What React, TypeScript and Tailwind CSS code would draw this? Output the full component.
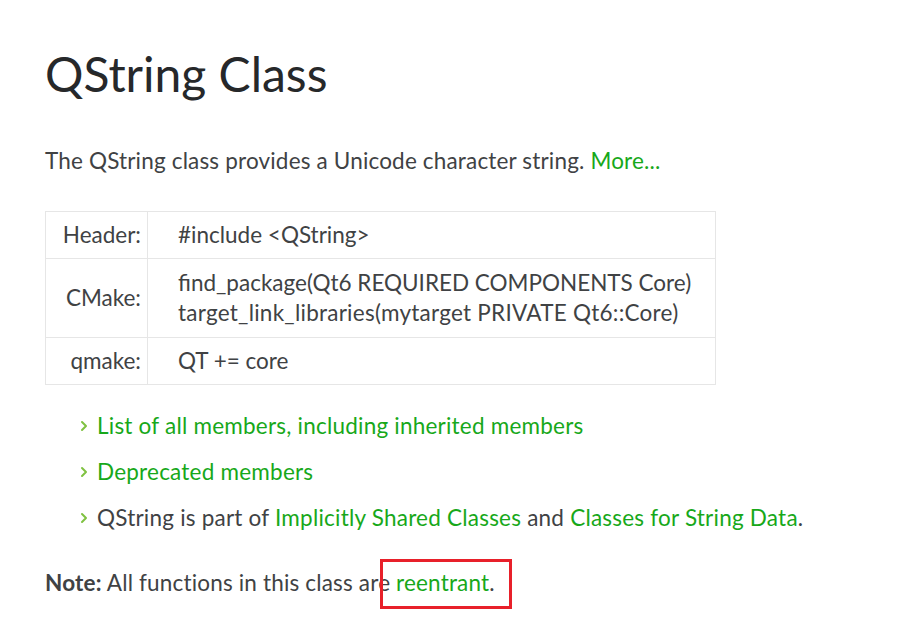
import React from "react";

const Chev = () => (
  <svg width="8" height="12" viewBox="0 0 8 12" className="shrink-0">
    <path d="M2 2 L6 6 L2 10" fill="none" stroke="#7fc241" strokeWidth="2" strokeLinecap="round" strokeLinejoin="round" />
  </svg>
);

export default function App() {
  const font = { fontFamily: "Lato, 'Open Sans', sans-serif" };
  return (
    <div className="w-[915px] h-[639px] bg-white text-[#404244] relative overflow-hidden" style={font}>
      <div className="pl-[45px] pt-[44px]">
        <h1 className="text-[48px] leading-[60px] font-normal text-[#26282a]">QString Class</h1>
        <p className="mt-[42px] text-[22.5px] leading-[30px] tracking-[0.17px]">
          The QString class provides a Unicode character string. <span className="text-[#17a81a]">More...</span>
        </p>
        <table className="mt-[35px] w-[671px] border-collapse text-[22.5px] leading-[30px]">
          <tbody>
            <tr className="h-[47px]">
              <td className="w-[102px] border border-[#e6e6e6] text-right pr-[6px]">Header:</td>
              <td className="border border-[#e6e6e6] pl-[30px]">#include &lt;QString&gt;</td>
            </tr>
            <tr className="h-[79px]">
              <td className="border border-[#e6e6e6] text-right pr-[6px]">CMake:</td>
              <td className="border border-[#e6e6e6] pl-[30px]">
                <div>find_package(Qt6 REQUIRED COMPONENTS Core)</div>
                <div className="tracking-[0.25px]">target_link_libraries(mytarget PRIVATE Qt6::Core)</div>
              </td>
            </tr>
            <tr className="h-[47px]">
              <td className="border border-[#e6e6e6] text-right pr-[6px]">qmake:</td>
              <td className="border border-[#e6e6e6] pl-[30px]">QT += core</td>
            </tr>
          </tbody>
        </table>
        <ul className="mt-[26px] pl-[35px] flex flex-col gap-[16px] text-[22.5px] leading-[30px] tracking-[0.22px]">
          <li className="flex items-center gap-[9px]"><Chev /><span className="text-[#17a81a]">List of all members, including inherited members</span></li>
          <li className="flex items-center gap-[9px]"><Chev /><span className="text-[#17a81a]">Deprecated members</span></li>
          <li className="flex items-center gap-[9px]"><Chev /><span>QString is part of <span className="text-[#17a81a]">Implicitly Shared Classes</span> and <span className="text-[#17a81a]">Classes for String Data</span>.</span></li>
        </ul>
        <p className="mt-[35px] text-[22.5px] leading-[30px] tracking-[0.17px]">
          <b className="font-bold">Note:</b> All functions in this class are <span className="text-[#17a81a]">reentrant</span>.
        </p>
      </div>
      <div className="absolute left-[380px] top-[559px] w-[132px] h-[50px] border-[3px] border-[#e8202a]" />
    </div>
  );
}
